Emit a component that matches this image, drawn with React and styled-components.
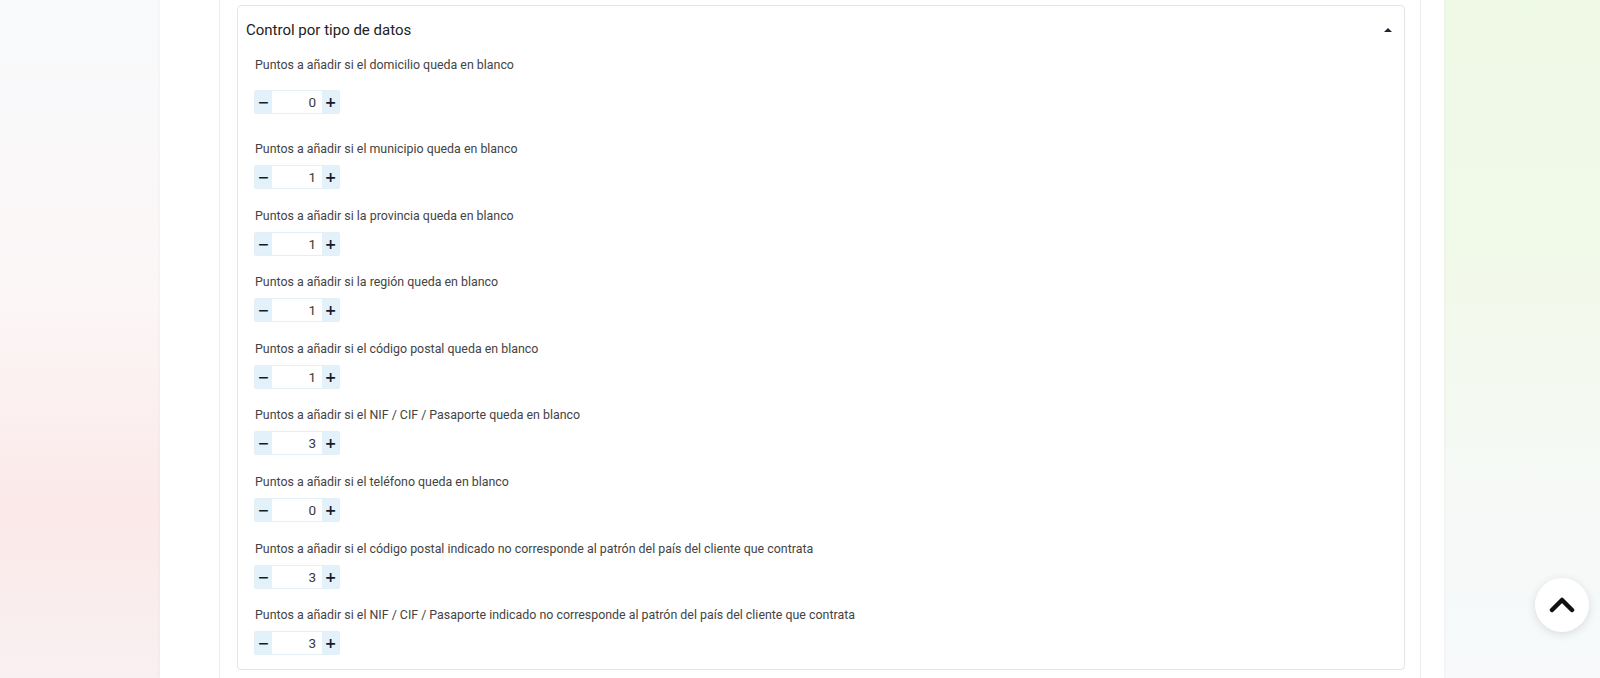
import React, { useState } from "react";
import styled, { createGlobalStyle } from "styled-components";

const GlobalStyle = createGlobalStyle`
  html, body {
    margin: 0;
    padding: 0;
    height: 100%;
  }
  body {
    font-family: Roboto, "Liberation Sans", Arial, sans-serif;
    color: #333;
    overflow: hidden;
    background:
      linear-gradient(180deg, rgba(248, 250, 252, 1) 0%, rgba(250, 240, 240, 0.6) 45%, rgba(251, 233, 233, 1) 75%, rgba(249, 240, 241, 1) 100%) left top / 160px 100% no-repeat,
      linear-gradient(180deg, #effae6 0%, #f2f9ea 40%, #f6f9f6 70%, #f7f9fb 100%) right top / 156px 100% no-repeat,
      #ffffff;
  }
`;

const Page = styled.div`
  display: flex;
  justify-content: flex-start;
  height: 678px;
`;

const Panel = styled.main`
  margin-left: 160px;
  width: 1284px;
  height: 100%;
  background: #fff;
  box-shadow: 0 0 4px rgba(0, 0, 0, 0.05);
  padding-left: 59px;
  padding-right: 23px;
  box-sizing: border-box;
`;

const Column = styled.div`
  height: 100%;
  border-left: 1px solid #ececec;
  border-right: 1px solid #ececec;
  padding: 5px 15px 0 17px;
  box-sizing: border-box;
`;

const Card = styled.section`
  border: 1px solid #e4e4e4;
  border-radius: 4px;
  background: #fff;
  padding-bottom: 14px;
`;

const CardHeader = styled.div`
  display: flex;
  align-items: center;
  justify-content: space-between;
  height: 48px;
  padding: 0 12px 0 8px;
  cursor: pointer;
`;

const Title = styled.h3`
  margin: 0;
  font-size: 15px;
  font-weight: 400;
  color: #222;
`;

const Caret = styled.span`
  width: 0;
  height: 0;
  border-left: 4px solid transparent;
  border-right: 4px solid transparent;
  border-bottom: 4px solid #1d2633;
`;

const CardBody = styled.div`
  padding: 0 17px;
`;

const Field = styled.div`
  display: flex;
  flex-direction: column;
  align-items: flex-start;
  margin-top: ${(p) => p.$top}px;
`;

const Label = styled.label`
  font-size: 12.4px;
  line-height: 18px;
  color: #444;
  margin-bottom: ${(p) => p.$gap}px;
`;

const Stepper = styled.div`
  display: flex;
  height: 24px;
  margin-left: -1px;
  border: 1px solid #e4eef5;
  border-radius: 2px;
  box-sizing: border-box;
  background: #fff;
`;

const StepButton = styled.button`
  width: 17px;
  padding: 0;
  border: none;
  background: #e3f1fa;
  color: #111c26;
  font-size: 14px;
  font-weight: 700;
  line-height: 1;
  display: flex;
  align-items: center;
  justify-content: center;
  cursor: pointer;
  font-family: "DejaVu Sans", sans-serif;
`;

const ValueInput = styled.input`
  width: 50px;
  border: none;
  outline: none;
  text-align: right;
  font-family: Roboto, "Liberation Sans", Arial, sans-serif;
  font-size: 13.5px;
  font-weight: 400;
  color: #3a3a3a;
  padding: 0 6px 0 0;
  box-sizing: border-box;
  background: #fff;
`;

const ScrollTop = styled.button`
  position: fixed;
  right: 11px;
  top: 578px;
  width: 54px;
  height: 54px;
  border-radius: 50%;
  border: none;
  background: #fff;
  box-shadow: 0 2px 10px rgba(0, 0, 0, 0.12);
  display: flex;
  align-items: center;
  justify-content: center;
  cursor: pointer;
`;

const fields = [
  { label: "Puntos a añadir si el domicilio queda en blanco", value: 0 },
  { label: "Puntos a añadir si el municipio queda en blanco", value: 1 },
  { label: "Puntos a añadir si la provincia queda en blanco", value: 1 },
  { label: "Puntos a añadir si la región queda en blanco", value: 1 },
  { label: "Puntos a añadir si el código postal queda en blanco", value: 1 },
  { label: "Puntos a añadir si el NIF / CIF / Pasaporte queda en blanco", value: 3 },
  { label: "Puntos a añadir si el teléfono queda en blanco", value: 0 },
  {
    label:
      "Puntos a añadir si el código postal indicado no corresponde al patrón del país del cliente que contrata",
    value: 3,
  },
  {
    label:
      "Puntos a añadir si el NIF / CIF / Pasaporte indicado no corresponde al patrón del país del cliente que contrata",
    value: 3,
  },
];

// el primer campo lleva más aire bajo la etiqueta
const spacing = (i) => {
  if (i === 0) return { top: 2, gap: 16 };
  if (i === 1) return { top: 26, gap: 7 };
  return { top: 17.6, gap: 7 };
};

const NumberField = ({ label, initial, index }) => {
  const [value, setValue] = useState(initial);
  const { top, gap } = spacing(index);
  return (
    <Field $top={top}>
      <Label $gap={gap}>{label}</Label>
      <Stepper>
        <StepButton onClick={() => setValue(Number(value) - 1)}>−</StepButton>
        <ValueInput value={value} onChange={(e) => setValue(e.target.value)} />
        <StepButton onClick={() => setValue(Number(value) + 1)}>+</StepButton>
      </Stepper>
    </Field>
  );
};

const App = () => {
  return (
    <Page>
      <GlobalStyle />
      <Panel>
        <Column>
          <Card>
            <CardHeader>
              <Title>Control por tipo de datos</Title>
              <Caret />
            </CardHeader>
            <CardBody>
              {fields.map((f, i) => (
                <NumberField key={i} index={i} label={f.label} initial={f.value} />
              ))}
            </CardBody>
          </Card>
        </Column>
      </Panel>
      <ScrollTop aria-label="Volver arriba">
        <svg width="26" height="18" viewBox="0 0 26 18">
          <path
            d="M3 14 L13 4 L23 14"
            fill="none"
            stroke="#111"
            strokeWidth="4.5"
            strokeLinecap="round"
            strokeLinejoin="round"
          />
        </svg>
      </ScrollTop>
    </Page>
  );
};

export default App;
